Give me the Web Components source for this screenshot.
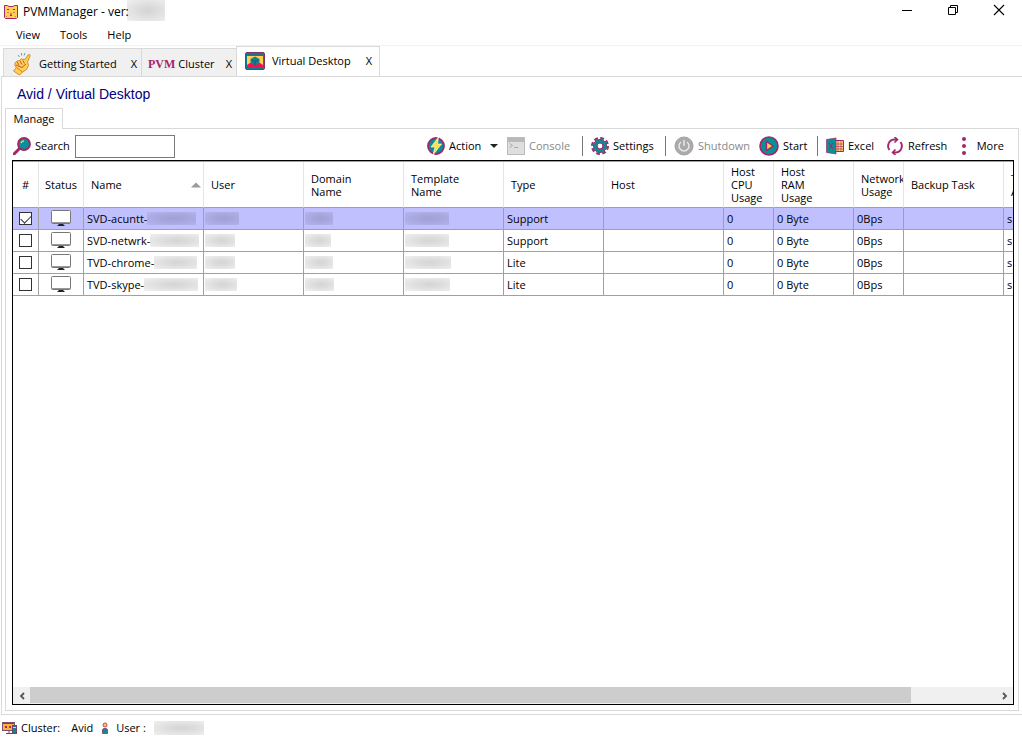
<!DOCTYPE html>
<html lang="en">
<head>
<meta charset="utf-8">
<title>PVMManager</title>
<style>
  html, body { height: 100%; }
  body { margin: 0; background: #fff; color: #000; font: 11px/16px "Open Sans", "Noto Sans", sans-serif; }
</style>
</head>
<body>
<pvm-app></pvm-app>
<script>
const ICONS = {
  app: ['0 0 16 16', '<path d="M1.5 1.5h3l1.5 1h4l1.5-1h3v12l-1 1h-11l-1-1z" fill="#ffcf4f" stroke="#a3266b"/><path d="M4 5.500h2M10 5.500h2M5 8v1M11 8v1M7 11l1 1 1-1M8 9v2" stroke="#a3266b" fill="none"/><path d="M3 12.500h1M12 12.500h1" stroke="#e08030"/>'],
  min: ['0 0 12 12', '<path d="M1 6.500h10" stroke="#000"/>'],
  restore: ['0 0 12 12', '<path d="M1.500 3.500h7v7h-7zM3.500 3.500v-2h7v7h-2" fill="none" stroke="#000"/>'],
  close: ['0 0 12 12', '<path d="M1 1l10 10M11 1L1 11" stroke="#000" stroke-width="1.100"/>'],
  snap: ['0 0 20 24', '<path d="M3 11l2-2 3-.5 1-1.500 4 .5 3-4.500c1-1.200 2.500-.2 2 1l-2.500 6 1 3.500-2 4-4 2.500-5-3-2.500-3z" fill="#ffd152" stroke="#d88b2a"/><path d="M5 10l2 3M8 9l2 3.500M11 8.500l1.500 3M4 13l6 2.500 4-3.500" stroke="#c8503c" fill="none"/><path d="M1.500 19l3-3.500 6 4.500-3 3z" fill="#ffd152" stroke="#d88b2a"/><path d="M6 3l1.500 2M9.500 1v2.500M13 1l-1 2.500" stroke="#57a6b2"/>'],
  desktop: ['0 0 20 18', '<rect x=".5" y=".5" width="19" height="17" rx="1.500" fill="#0b7f93" stroke="#7c356f"/><path d="M2 4h16v12H2z" fill="#ffcf4f"/><path d="M2 16v-3l3-2h10l3 2v3z" fill="#f80f4f"/><path d="M10 4.500l4.500 2.500v4L10 13.500 5.500 11V7z" fill="#138293"/><path d="M6.500 8L10 9.500 13.500 8M10 9.500v4" stroke="#24536f" fill="none"/><path d="M2.500 2.500h15" stroke="#286c7d"/>'],
  search: ['0 0 18 18', '<path d="M1 17l6-6" stroke="#a3266b" stroke-width="3" stroke-linecap="round"/><circle cx="11" cy="7" r="6" fill="#079098" stroke="#a3266b" stroke-width="1.800"/><path d="M8 6c.5-1.500 1.500-2 3-2" stroke="#ffd34d" stroke-width="1.500" fill="none"/>'],
  action: ['0 0 18 18', '<circle cx="9" cy="9" r="8" fill="#079098" stroke="#a3266b" stroke-width="1.800"/><path d="M11.500 0L4 10h4l-2 8 8.500-11h-4z" fill="#ffe04c" stroke="#fff" stroke-width=".6"/>'],
  console: ['0 0 18 18', '<rect x=".5" y=".5" width="17" height="17" fill="#dedede" stroke="#bcbcbc"/><path d="M1 1h16v4H1z" fill="#b9b9b9"/><path d="M2.500 6.500l3 2-3 2M7 10.500h4" stroke="#aaa" fill="none"/>'],
  gear: ['0 0 18 18', '<circle cx="9" cy="9" r="7.500" fill="none" stroke="#a3266b" stroke-width="3" stroke-dasharray="3.600 2.290"/><circle cx="9" cy="9" r="6.500" fill="#079098" stroke="#a3266b" stroke-width="1"/><circle cx="9" cy="9" r="7" fill="none" stroke="#079098" stroke-width="1.600" stroke-dasharray="2 3.498" stroke-dashoffset="-.7"/><circle cx="9" cy="9" r="3" fill="#fff" stroke="#a3266b" stroke-width="1.200"/>'],
  power: ['0 0 20 20', '<circle cx="10" cy="10" r="9" fill="#aaa" stroke="#a2a2a2"/><path d="M7 6a5 5 0 1 0 6 0M10 4v6" fill="none" stroke="#e8e8e8" stroke-width="1.500"/>'],
  play: ['0 0 20 20', '<circle cx="10" cy="10" r="9" fill="#079098" stroke="#a3266b" stroke-width="1.600"/><path d="M7.500 5.500l6.500 4.500-6.500 4.500z" fill="#ffd34d" stroke="#a3266b" stroke-width="1.400"/>'],
  excel: ['0 0 18 18', '<path d="M9 3.500h8.500v11H9z" fill="#ffd76a" stroke="#a3266b"/><path d="M12 3v12M15 3v12M10 7h8M10 9.500h8M10 12h8" stroke="#a3266b" stroke-width=".6"/><path d="M.5 2.500L10 1v16L.5 15.500z" fill="#079098" stroke="#a3266b" stroke-width=".7"/><path d="M3 6l4 6M7 6l-4 6" stroke="#a3266b"/>'],
  refresh: ['0 0 18 18', '<path d="M3.500 13A6.500 6.500 0 0 1 8 2.500h3M14.500 5A6.500 6.500 0 0 1 10 15.500H7" fill="none" stroke="#a3266b" stroke-width="1.800"/><path d="M8.500 0L11.500 2.500l-3 3M9.500 12.500L6.500 15.500l3 2.500" fill="none" stroke="#a3266b" stroke-width="1.600"/>'],
  dots: ['0 0 6 18', '<g fill="#a3266b"><circle cx="3" cy="2" r="2"/><circle cx="3" cy="9" r="2"/><circle cx="3" cy="16" r="2"/></g>'],
  caret: ['0 0 8 6', '<path d="M0 1h8L4 5z" fill="#222"/>'],
  sort: ['0 0 10 6', '<path d="M0 5.500h10L5 .5z" fill="#9b9b9b"/>'],
  monitor: ['0 0 20 17', '<rect x=".5" y=".5" width="19" height="13" rx="1" fill="#fff" stroke="#777"/><path d="M1 12.500h18" stroke="#999"/><path d="M8 14h4l2 2H6z" fill="#222"/>'],
  left: ['0 0 8 8', '<path d="M6 1L3 4l3 3" fill="none" stroke="#555" stroke-width="1.800"/>'],
  right: ['0 0 8 8', '<path d="M2 1l3 3-3 3" fill="none" stroke="#555" stroke-width="1.800"/>'],
  cluster: ['0 0 16 14', '<rect x=".5" y="1.500" width="12" height="8" fill="#ffad3c" stroke="#805071"/><path d="M1 2.500h11" stroke="#a3266b"/><path d="M3 6h2M7 6h2" stroke="#a3266b" stroke-width="2"/><path d="M4 12.500h6M7 10v3" stroke="#a3266b"/><rect x="10.500" y="4.500" width="4" height="8" fill="#13848d" stroke="#754464"/><path d="M11 6.500h3" stroke="#ffd34d"/>'],
  person: ['0 0 8 12', '<circle cx="4" cy="3" r="2" fill="#ffc64d" stroke="#bc496b"/><path d="M1.500 11.500V7.500l1-1h3l1 1v4z" fill="#148795" stroke="#855373"/>']
};
const define = (name, css, html, setup) => {
  const tpl = document.createElement('template');
  customElements.define(name, class extends HTMLElement {
    constructor() {
      super();
      tpl.innerHTML ||= `<style>*{box-sizing:border-box}button{font:inherit;color:inherit;background:none;border:0;padding:0;margin:0}${css}</style>${html}`;
      this.attachShadow({ mode: 'open' }).append(tpl.content.cloneNode(true));
    }
    connectedCallback() { setup?.(this, this.shadowRoot); }
  });
};

define('pvm-icon', ':host{display:inline-flex;flex:none}svg{display:block}', '', (el, root) => {
  if (root.querySelector('svg')) return;
  const [box, body] = ICONS[el.getAttribute('name')];
  const [, , w, h] = box.split(' ');
  root.innerHTML += `<svg viewBox="${box}" width="${w}" height="${h}" aria-hidden="true">${body}</svg>`;
});

define('pvm-redacted', `
  :host{display:inline-block;flex:none;width:var(--w,30px);height:var(--h,13px);vertical-align:top;
    background:radial-gradient(ellipse at 55% 50%,rgba(0,0,0,.17),rgba(0,0,0,.13) 40%,rgba(0,0,0,.06) 100%)}`, '');

define('pvm-titlebar', `
  :host{display:flex;align-items:center;height:23px;padding-left:3px}
  h1{font:12px/16px inherit;font-size:12px;font-weight:400;margin:0 0 0 4px}
  nav{margin-left:auto;display:flex;height:20px;align-self:flex-start}
  ::slotted(pvm-redacted){align-self:flex-start;margin-left:-2px}
  button{width:46px;display:flex;align-items:center;justify-content:center}`,
  `<pvm-icon name="app"></pvm-icon><h1><slot></slot></h1><slot name="extra"></slot>
  <nav><button aria-label="Minimize"><pvm-icon name="min"></pvm-icon></button><button aria-label="Restore"><pvm-icon name="restore"></pvm-icon></button><button aria-label="Close"><pvm-icon name="close"></pvm-icon></button></nav>`);

define('pvm-menubar', `
  :host{display:flex;align-items:center;box-sizing:border-box;height:23px;padding:2px 0 0 16px;gap:20px;border-bottom:1px solid #f2f2f2}`,
  '<button>View</button><button>Tools</button><button>Help</button>');

define('pvm-tab', `
  :host{display:flex;align-items:center;box-sizing:border-box;height:28px;background:#f0f0f0;border:1px solid #d9d9d9;border-bottom:0;border-right:0;padding:2px 4px 0 var(--pad,8px);width:var(--w)}
  :host([active]){height:31px;background:#fff;border-right:1px solid #d9d9d9;margin-bottom:-1px;padding:0 7px 2px 8px}
  .name{display:flex;align-items:center;gap:var(--gap,7px);white-space:nowrap}
  .x{margin-left:auto}`,
  '<button class="name" role="tab"><slot name="icon"></slot><span><slot></slot></span></button><button class="x" aria-label="Close tab">X</button>');

define('pvm-tool', `
  :host{display:flex;align-items:center;box-sizing:border-box;width:var(--w);height:24px}
  :host([disabled]){color:#888}
  :host([divided]){border-left:1px solid #777;height:20px;padding-left:8px}
  button{display:flex;align-items:center;gap:4px;white-space:nowrap}
  span{display:flex;align-items:center;gap:var(--gap,0)}`,
  '<button><slot name="icon"></slot><span><slot></slot></span></button>', (el, root) => {
    root.querySelector('button').disabled = el.hasAttribute('disabled');
  });

define('pvm-toolbar', `
  :host{display:flex;align-items:center;box-sizing:border-box;height:31px;padding:3px 0 0 7px}
  label{margin:0 5px 0 4px}
  input{width:100px;height:23px;border:1px solid #7a7a7a;padding:0 3px;font:inherit;outline:0}
  .tools{margin-left:auto;display:flex;align-items:center}`,
  `<pvm-icon name="search"></pvm-icon><label for="q">Search</label><input id="q" type="text">
  <div class="tools">
    <pvm-tool style="--w:80px;--gap:9px"><pvm-icon slot="icon" name="action"></pvm-icon>Action<pvm-icon name="caret"></pvm-icon></pvm-tool>
    <pvm-tool style="--w:75px" disabled><pvm-icon slot="icon" name="console"></pvm-icon>Console</pvm-tool>
    <pvm-tool style="--w:83px" divided><pvm-icon slot="icon" name="gear"></pvm-icon>Settings</pvm-tool>
    <pvm-tool style="--w:94px" divided disabled><pvm-icon slot="icon" name="power"></pvm-icon>Shutdown</pvm-tool>
    <pvm-tool style="--w:58px"><pvm-icon slot="icon" name="play"></pvm-icon>Start</pvm-tool>
    <pvm-tool style="--w:69px" divided><pvm-icon slot="icon" name="excel"></pvm-icon>Excel</pvm-tool>
    <pvm-tool style="--w:75px"><pvm-icon slot="icon" name="refresh"></pvm-icon>Refresh</pvm-tool>
    <pvm-tool style="--w:53px"><pvm-icon slot="icon" name="dots"></pvm-icon>&nbsp; More</pvm-tool>
  </div>`);

const COLS = [['#', 26], ['Status', 45], ['Name', 120], ['User', 100], ['Domain<br>Name', 100], ['Template<br>Name', 100], ['Type', 100], ['Host', 120], ['Host<br>CPU<br>Usage', 50], ['Host<br>RAM<br>Usage', 80], ['Network<br>Usage', 50], ['Backup Task', 100], ['T<br>A', 100]];
const ROWS = [
  ['SVD-acuntt-', 'Support', 49, 34, 28, 44, true],
  ['SVD-netwrk-', 'Support', 49, 30, 26, 44],
  ['TVD-chrome-', 'Lite', 43, 30, 28, 46],
  ['TVD-skype-', 'Lite', 54, 32, 29, 45]
];
const hidden = w => `<pvm-redacted style="--w:${w}px"></pvm-redacted>`;
define('pvm-grid', `
  :host{display:block;flex:1;min-height:0;overflow:hidden;line-height:13px;border-top:1px solid #a0a0a0}
  table{border-collapse:separate;border-spacing:0;table-layout:fixed;width:1091px}
  th{height:46px;padding:0 0 0 7px;text-align:left;font-weight:400;overflow:hidden;white-space:nowrap;border-right:1px solid #e5e5e5;border-bottom:1px solid #a0a0a0}
  td{height:22px;padding:0 0 0 3px;overflow:hidden;white-space:nowrap;border-right:1px solid #a0a0a0;border-bottom:1px solid #a0a0a0}
  td.r{padding-left:1px}
  .c{text-align:center;padding:0}
  .sort{display:flex;align-items:center;justify-content:space-between;padding-right:2px}
  .on{background:#c0c0ff}
  .st pvm-icon{vertical-align:middle}
  input{appearance:none;display:block;width:13px;height:13px;margin:0 auto;border:1px solid #333;background:#fff}
  input:checked::before{content:"";display:block;width:9px;height:5px;margin:2px 0 0 1px;border:solid #333;border-width:0 0 1px 1px;transform:rotate(-45deg)}`,
  `<table><colgroup>${COLS.map(c => `<col style="width:${c[1]}px">`).join('')}</colgroup>
  <thead><tr>${COLS.map((c, i) => `<th${i < 2 ? ' class="c"' : ''}>${i === 2 ? '<span class="sort">Name<pvm-icon name="sort"></pvm-icon></span>' : c[0]}</th>`).join('')}</tr></thead>
  <tbody>${ROWS.map(([n, t, a, b, c, d, on]) => `<tr${on ? ' class="on"' : ''}><td class="c"><input type="checkbox" aria-label="Select ${n}"${on ? ' checked' : ''}></td><td class="c st"><pvm-icon name="monitor"></pvm-icon></td><td>${n}${hidden(a)}</td><td class="r">${hidden(b)}</td><td class="r">${hidden(c)}</td><td class="r">${hidden(d)}</td><td>${t}</td><td></td><td>0</td><td>0 Byte</td><td>0Bps</td><td></td><td>s</td></tr>`).join('')}</tbody></table>`);

define('pvm-scrollbar', `
  :host{display:flex;height:17px;background:#f0f0f0}
  button{width:17px;display:flex;align-items:center;justify-content:center}
  .track{flex:1;display:flex}
  .thumb{width:91.2%;height:16px;background:#cdcdcd}`,
  '<button aria-label="Scroll left"><pvm-icon name="left"></pvm-icon></button><div class="track"><div class="thumb"></div></div><button aria-label="Scroll right"><pvm-icon name="right"></pvm-icon></button>');

define('pvm-statusbar', `
  :host{display:flex;align-items:center;box-sizing:border-box;height:22px;padding:4px 2px 0}
  pvm-icon{margin-right:3px}
  .value{margin-left:11px}
  .user{margin:0 7px 0 8px}`,
  '<pvm-icon name="cluster"></pvm-icon><span>Cluster:</span><span class="value">Avid</span><pvm-icon class="user" name="person"></pvm-icon><span>User :</span><slot></slot>');

define('pvm-app', `
  :host{display:flex;flex-direction:column;min-height:100vh}
  .tabs{display:flex;align-items:flex-end;height:30px;padding-left:3px}
  .logo{font:bold 12px/20px "Liberation Serif",serif;color:#a3266b}
  .page{flex:1;display:flex;flex-direction:column;margin:0 0 0 1px;border:1px solid #d9d9d9;border-right:0;padding:0 3px 3px;min-height:0}
  h2{font:14px/18px "Liberation Sans",Arial,sans-serif;color:#000080;margin:8px 0 5px 12px}
  .sub{align-self:flex-start;height:21px;width:58px;border:1px solid #d9d9d9;border-bottom:0;background:#fff;margin-bottom:-1px;z-index:1}
  .panel{flex:1;display:flex;flex-direction:column;border:1px solid #d9d9d9;padding:0 4px 5px 6px}
  pvm-toolbar{margin:0 0 0 -6px}
  .frame{flex:1;display:flex;flex-direction:column;border:1px solid #000;min-height:0}`,
  `<pvm-titlebar>PVMManager - ver:<pvm-redacted slot="extra" style="--w:38px;--h:21px"></pvm-redacted></pvm-titlebar>
  <pvm-menubar></pvm-menubar>
  <div class="tabs" role="tablist">
    <pvm-tab style="--w:138px"><pvm-icon slot="icon" name="snap"></pvm-icon>Getting Started</pvm-tab>
    <pvm-tab style="--w:95px;--pad:6px;--gap:3px"><span slot="icon" class="logo">PVM</span>Cluster</pvm-tab>
    <pvm-tab style="--w:144px" active><pvm-icon slot="icon" name="desktop"></pvm-icon>Virtual Desktop</pvm-tab>
  </div>
  <main class="page">
    <h2>Avid / Virtual Desktop</h2>
    <button class="sub">Manage</button>
    <section class="panel"><pvm-toolbar></pvm-toolbar>
      <div class="frame"><pvm-grid></pvm-grid><pvm-scrollbar></pvm-scrollbar></div>
    </section>
  </main>
  <pvm-statusbar><pvm-redacted style="--w:50px;--h:14px;margin-left:8px"></pvm-redacted></pvm-statusbar>`);
</script>
</body>
</html>
